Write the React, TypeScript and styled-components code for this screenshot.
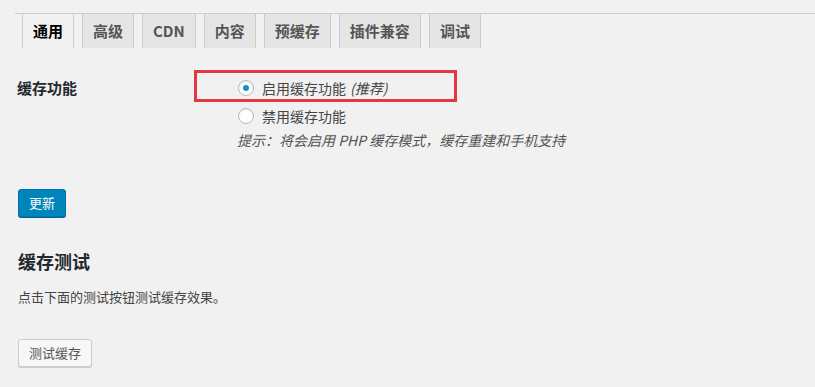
import React from "react";
import styled, { createGlobalStyle } from "styled-components";

const Global = createGlobalStyle`
  html, body { margin: 0; padding: 0; background: #f1f1f1; }
  body {
    font-family: "Noto Sans CJK SC", "Noto Sans", "Liberation Sans", sans-serif;
    color: #444;
    font-size: 13px;
  }
`;

const Page = styled.div`
  padding-top: 13px;
  width: 815px;
  height: 387px;
  box-sizing: border-box;
  overflow: hidden;
`;

const TabBar = styled.nav`
  margin-left: 15px;
  border-top: 1px solid #ccc;
  padding-left: 7px;
  display: flex;
  gap: 8px;
`;

const Tab = styled.a<{ $active?: boolean }>`
  display: block;
  height: 34px;
  line-height: 34px;
  padding: 0 10px;
  border-left: 1px solid #ccc;
  border-right: 1px solid #ccc;
  background: ${(p) => (p.$active ? "#f1f1f1" : "#e5e5e5")};
  color: ${(p) => (p.$active ? "#000" : "#555")};
  font-size: 15px;
  font-weight: 700;
  text-decoration: none;
  white-space: nowrap;
`;

const Content = styled.div`
  padding-left: 17px;
`;

const FormRow = styled.div`
  margin-top: 26px;
  display: grid;
  grid-template-columns: 220px 1fr;
`;

const Label = styled.div`
  font-size: 15px;
  font-weight: 700;
  color: #23282d;
  line-height: 28px;
`;

const Options = styled.div`
  display: flex;
  flex-direction: column;
`;

const RadioRow = styled.label`
  position: relative;
  display: flex;
  align-items: center;
  height: 28px;
  font-size: 14px;
  color: #444;
`;

const Radio = styled.span<{ $checked?: boolean }>`
  box-sizing: border-box;
  width: 16px;
  height: 16px;
  margin-left: 1px;
  margin-right: 8px;
  border-radius: 50%;
  border: 1px solid #b4b9be;
  background: #fff;
  box-shadow: inset 0 1px 2px rgba(0, 0, 0, 0.1);
  display: flex;
  align-items: center;
  justify-content: center;
  &::after {
    content: "";
    display: ${(p) => (p.$checked ? "block" : "none")};
    width: 6px;
    height: 6px;
    border-radius: 50%;
    background: #1e8cbe;
  }
`;

const Em = styled.em`
  margin-left: 4px;
  font-style: italic;
  color: #444;
`;

const Highlight = styled.span`
  position: absolute;
  left: -43px;
  top: -4px;
  width: 263px;
  height: 32px;
  box-sizing: border-box;
  border: 3px solid #e0393e;
  pointer-events: none;
`;

const Hint = styled.p`
  margin: 0;
  line-height: 20px;
  font-size: 14px;
  font-style: italic;
  color: #555;
  white-space: nowrap;
`;

const Button = styled.button<{ $primary?: boolean }>`
  box-sizing: border-box;
  display: block;
  height: 28px;
  padding: 0 10px;
  border-radius: 3px;
  font-family: inherit;
  font-size: 13px;
  line-height: 26px;
  cursor: pointer;
  border: 1px solid ${(p) => (p.$primary ? "#0073aa" : "#ccc")};
  background: ${(p) => (p.$primary ? "#0085ba" : "#f7f7f7")};
  color: ${(p) => (p.$primary ? "#fff" : "#555")};
  box-shadow: 0 1px 0 ${(p) => (p.$primary ? "#006799" : "#ccc")};
  margin-top: ${(p) => (p.$primary ? "39px" : "32px")};
  margin-left: 1px;
`;

const Heading = styled.h2`
  margin: 32px 0 0 1px;
  font-size: 18px;
  line-height: 24px;
  font-weight: 700;
  color: #23282d;
`;

const Para = styled.p`
  margin: 14px 0 0 1px;
  font-size: 13px;
  line-height: 20px;
  color: #444;
`;

const tabs = ["通用", "高级", "CDN", "内容", "预缓存", "插件兼容", "调试"];

export default function App() {
  return (
    <Page>
      <Global />
      <TabBar>
        {tabs.map((t, i) => (
          <Tab key={t} $active={i === 0}>
            {t}
          </Tab>
        ))}
      </TabBar>
      <Content>
        <FormRow>
          <Label>缓存功能</Label>
          <Options>
            <RadioRow>
              <Highlight />
              <Radio $checked />
              启用缓存功能<Em>(推荐)</Em>
            </RadioRow>
            <RadioRow>
              <Radio />
              禁用缓存功能
            </RadioRow>
            <Hint>提示：将会启用 PHP 缓存模式，缓存重建和手机支持</Hint>
          </Options>
        </FormRow>
        <Button $primary>更新</Button>
        <Heading>缓存测试</Heading>
        <Para>点击下面的测试按钮测试缓存效果。</Para>
        <Button>测试缓存</Button>
      </Content>
    </Page>
  );
}
